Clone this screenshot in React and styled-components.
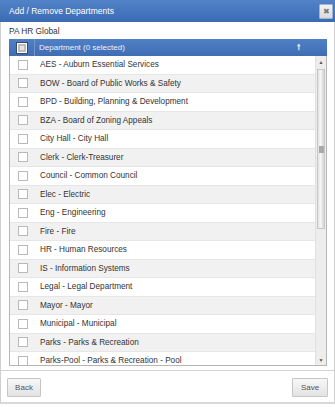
import React, {useState} from 'react'
import styled, {createGlobalStyle} from "styled-components";

const GlobalStyle = createGlobalStyle`
    html, body {
        margin: 0;
        padding: 0;
        background: #fff;
    }
    body {
        font-family: "Liberation Sans", Arial, sans-serif;
        font-size: 8px;
        color: #333;
    }
`;

const Dialog = styled.div`
    width: 335px;
    height: 404px;
    box-sizing: border-box;
    border: 1px solid #cfcfcf;
    border-top: none;
    border-bottom: 2px solid #d8d8d8;
    display: flex;
    flex-direction: column;
    background: #fff;
`;

const TitleBar = styled.div`
    height: 22px;
    margin: 0 -1px;
    padding: 0 2px 0 9px;
    display: flex;
    align-items: center;
    justify-content: space-between;
    background: linear-gradient(#5283c8, #3b6bb3);
    color: #fff;
    font-size: 8.5px;

    .close {
        width: 14px;
        height: 15px;
        box-sizing: border-box;
        border: 1px solid #9fb3d3;
        background: linear-gradient(#f2f2f2, #d9d9d9);
        color: #777;
        font-size: 8px;
        display: flex;
        align-items: center;
        justify-content: center;
        border-radius: 1px;
    }
`;

const Content = styled.div`
    padding: 0 7px 0 8px;
    display: flex;
    flex-direction: column;
`;

const Caption = styled.div`
    height: 15px;
    padding-top: 2px;
    line-height: 15px;
    font-size: 8.3px;
    color: #333;
`;

const Grid = styled.div`
    width: 318px;
    border: 1px solid #b5b5b5;
    border-top: none;
    box-sizing: border-box;
`;

const Header = styled.div`
    height: 17px;
    display: flex;
    align-items: center;
    background: linear-gradient(#4f80c5, #3f6db4);
    color: #eef3fb;
    margin: 0 -1px;

    .check {
        width: 26px;
        height: 100%;
        display: flex;
        align-items: center;
        justify-content: center;
        border-right: 1px solid #7395c9;
        box-sizing: border-box;
    }

    .title {
        flex: 1;
        padding-left: 4px;
        font-size: 8px;
    }

    .sort {
        width: 30px;
        font-size: 8px;
        font-weight: bold;
    }
`;

const HeaderBox = styled.span`
    width: 12px;
    height: 12px;
    box-sizing: border-box;
    border: 1px solid #3a4a66;
    background: #e4e4e4;
    box-shadow: inset 0 0 0 1px #fff, inset 0 0 0 3px #bdbdbd;
`;

const Body = styled.div`
    height: 309px;
    display: flex;
    overflow: hidden;
`;

const List = styled.div`
    flex: 1;
    overflow: hidden;
`;

const Row = styled.div`
    height: 18.5px;
    display: flex;
    align-items: center;
    box-sizing: border-box;
    border-bottom: 1px solid #e6e6e6;
    background: ${p => p.$odd ? '#f1f1f1' : '#fff'};

    .cell {
        width: 26px;
        display: flex;
        justify-content: center;
    }

    .name {
        padding-left: 4px;
        font-size: 8.2px;
        color: #333;
        white-space: nowrap;
    }
`;

const Box = styled.span`
    width: 10px;
    height: 10px;
    box-sizing: border-box;
    border: 1px solid #b9b9b9;
    background: #fff;
`;

const ScrollBar = styled.div`
    width: 10px;
    display: flex;
    flex-direction: column;
    background: #ededed;
    border-left: 1px solid #e0e0e0;

    .arrow {
        height: 11px;
        display: flex;
        align-items: center;
        justify-content: center;
        color: #555;
        font-size: 5px;
    }

    .track {
        flex: 1;
        padding-top: 2px;
    }

    .thumb {
        height: 158px;
        margin: 0 1px;
        border: 1px solid #c7c7c7;
        background: linear-gradient(90deg, #e0e0e0, #f7f7f7 40%, #d4d4d4);
        display: flex;
        align-items: center;
        justify-content: center;
    }

    .grip {
        width: 5px;
        height: 7px;
        background: #a9a9a9;
    }
`;

const Footer = styled.div`
    margin-top: 4px;
    border-top: 1px solid #d2d2d2;
    padding: 7px 6px 0 6px;
    display: flex;
    justify-content: space-between;
`;

const Button = styled.button`
    height: 19px;
    width: ${p => p.$w}px;
    padding: 0;
    border: 1px solid #c6c6c6;
    background: linear-gradient(#f7f7f7, #e3e3e3);
    color: #555;
    font-family: "Liberation Sans", Arial, sans-serif;
    font-size: 8px;
    border-radius: 1px;
`;

const departments = [
    'AES - Auburn Essential Services',
    'BOW - Board of Public Works & Safety',
    'BPD - Building, Planning & Development',
    'BZA - Board of Zoning Appeals',
    'City Hall - City Hall',
    'Clerk - Clerk-Treasurer',
    'Council - Common Council',
    'Elec - Electric',
    'Eng - Engineering',
    'Fire - Fire',
    'HR - Human Resources',
    'IS - Information Systems',
    'Legal - Legal Department',
    'Mayor - Mayor',
    'Municipal - Municipal',
    'Parks - Parks & Recreation',
    'Parks-Pool - Parks & Recreation - Pool',
];

const App = () => {
    let [selected] = useState([]);

    return (
        <>
            <GlobalStyle/>
            <Dialog>
                <TitleBar>
                    <span>Add / Remove Departments</span>
                    <span className="close">✖</span>
                </TitleBar>
                <Content>
                    <Caption>PA HR Global</Caption>
                    <Grid>
                        <Header>
                            <div className="check"><HeaderBox/></div>
                            <div className="title">Department ({selected.length} selected)</div>
                            <div className="sort">🠕</div>
                        </Header>
                        <Body>
                            <List>
                                {departments.map((d, i) => (
                                    <Row key={d} $odd={i % 2 === 1}>
                                        <div className="cell"><Box/></div>
                                        <div className="name">{d}</div>
                                    </Row>
                                ))}
                            </List>
                            <ScrollBar>
                                <div className="arrow">▲</div>
                                <div className="track">
                                    <div className="thumb"><span className="grip"/></div>
                                </div>
                                <div className="arrow">▼</div>
                            </ScrollBar>
                        </Body>
                    </Grid>
                </Content>
                <Footer>
                    <Button $w={34}>Back</Button>
                    <Button $w={36}>Save</Button>
                </Footer>
            </Dialog>
        </>
    )
}
export default App;
